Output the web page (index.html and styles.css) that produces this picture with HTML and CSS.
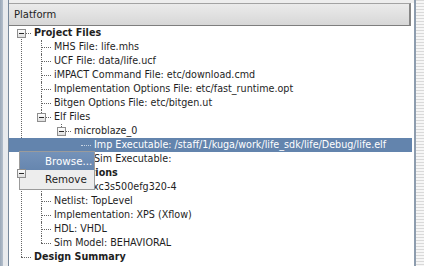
FILE: index.html
```html
<!DOCTYPE html>
<html lang="en">
<head>
    <meta charset="UTF-8">
    <meta name="viewport" content="width=device-width, initial-scale=1.0">
    <title>Platform</title>
    <link rel="stylesheet" href="styles.css">
</head>
<body>
    <div class="window-edge"></div>
    <div class="panel">
        <div class="panel-top"></div>
        <div class="header"><span class="header-title">Platform</span></div>
        <div class="tree-view">
            <ul class="tree root">
                <li>
                    <div class="row"><span class="toggle"></span><span class="label bold">Project Files</span></div>
                    <ul class="tree">
                        <li><div class="row"><span class="label">MHS File: life.mhs</span></div></li>
                        <li><div class="row"><span class="label">UCF File: data/life.ucf</span></div></li>
                        <li><div class="row"><span class="label">iMPACT Command File: etc/download.cmd</span></div></li>
                        <li><div class="row"><span class="label">Implementation Options File: etc/fast_runtime.opt</span></div></li>
                        <li><div class="row"><span class="label">Bitgen Options File: etc/bitgen.ut</span></div></li>
                        <li>
                            <div class="row"><span class="toggle"></span><span class="label">Elf Files</span></div>
                            <ul class="tree">
                                <li>
                                    <div class="row"><span class="toggle"></span><span class="label">microblaze_0</span></div>
                                    <ul class="tree">
                                        <li class="selected"><div class="row"><span class="label">Imp Executable: /staff/1/kuga/work/life_sdk/life/Debug/life.elf</span></div></li>
                                        <li><div class="row"><span class="label">Sim Executable:</span></div></li>
                                    </ul>
                                </li>
                            </ul>
                        </li>
                    </ul>
                </li>
                <li>
                    <div class="row"><span class="toggle"></span><span class="label bold">Project Options</span></div>
                    <ul class="tree">
                        <li><div class="row"><span class="label">Device: xc3s500efg320-4</span></div></li>
                        <li><div class="row"><span class="label">Netlist: TopLevel</span></div></li>
                        <li><div class="row"><span class="label">Implementation: XPS (Xflow)</span></div></li>
                        <li><div class="row"><span class="label">HDL: VHDL</span></div></li>
                        <li><div class="row"><span class="label">Sim Model: BEHAVIORAL</span></div></li>
                    </ul>
                </li>
                <li><div class="row"><span class="label bold">Design Summary</span></div></li>
            </ul>
        </div>
    </div>
    <div class="scroll-track"></div>

    <div class="context-menu">
        <div class="menu-item active">Browse...</div>
        <div class="menu-item">Remove</div>
    </div>
</body>
</html>
```

FILE: styles.css
```css
body {
    margin: 0;
    width: 424px;
    height: 266px;
    overflow: hidden;
    display: flex;
    background-color: #e8eaed;
    font-family: "DejaVu Sans", sans-serif;
    color: #1e1e1e;
}
.window-edge {
    width: 3px;
    margin-right: 5px;
    background: linear-gradient(to right, #9aa8b8, #b4bfcc);
}
.panel {
    width: 405px;
    border-left: 1px solid #76879a;
    border-right: 2px solid #8d9cae;
    background-color: white;
    display: flex;
    flex-direction: column;
}
.panel-top {
    height: 3px;
    background-color: #eeeeee;
}
.header {
    height: 21px;
    margin-right: 3px;
    border-top: 1px solid #a3a3a3;
    border-bottom: 1px solid #7e7e7e;
    border-right: 2px solid #868686;
    background: linear-gradient(#ebebeb, #d7d7d7);
    display: flex;
    align-items: center;
    padding-left: 5px;
}
.header-title {
    font-size: 10px;
}
.tree-view {
    flex: 1;
    overflow: hidden;
    padding-right: 2px;
    font-size: 9.6px;
    line-height: 14px;
}
.tree {
    list-style: none;
    margin: 0;
    padding: 0;
}
.tree .tree {
    padding-left: 20px;
}
.tree li {
    position: relative;
}
/* vertical connector */
.tree li::before {
    content: '';
    position: absolute;
    left: 12px;
    top: 0;
    bottom: 0;
    border-left: 1px dotted #666;
}
.tree li:last-child::before {
    bottom: auto;
    height: 7px;
}
.root > li:first-child::before {
    top: 7px;
}
.row {
    position: relative;
    height: 14px;
    padding-left: 24px;
    white-space: nowrap;
}
/* horizontal connector */
.row::before {
    content: '';
    position: absolute;
    left: 12px;
    top: 7px;
    width: 10px;
    border-top: 1px dotted #666;
}
.toggle {
    position: absolute;
    left: 8px;
    top: 3px;
    width: 7px;
    height: 7px;
    border: 1px solid #8e8e8e;
    background: linear-gradient(#ffffff, #dedede);
    z-index: 1;
}
.toggle::after {
    content: '';
    position: absolute;
    left: 1px;
    top: 3px;
    width: 5px;
    height: 1px;
    background-color: #2a2a2a;
}
.label {
    padding-left: 1px;
}
.bold {
    font-weight: bold;
}
.selected > .row {
    background-color: #6384ad;
    box-shadow: -120px 0 0 0 #6384ad;
    color: white;
}
.selected > .row::before {
    border-top-color: #c8d4e3;
}
.scroll-track {
    flex: 1;
    background-color: #f6f6f6;
    background-image: linear-gradient(#d9d9d9 1px, transparent 1px);
    background-size: 100% 3px;
    background-position: 2px 0;
}
.context-menu {
    position: absolute;
    left: 19px;
    top: 151px;
    width: 74px;
    border: 1px solid #9b9b9b;
    background-color: #ededed;
    font-size: 10.3px;
}
.menu-item {
    height: 19px;
    line-height: 19px;
    padding-left: 25px;
}
.menu-item.active {
    height: 18px;
    line-height: 18px;
    background: linear-gradient(#7492b9, #6686af);
    color: white;
}
```
